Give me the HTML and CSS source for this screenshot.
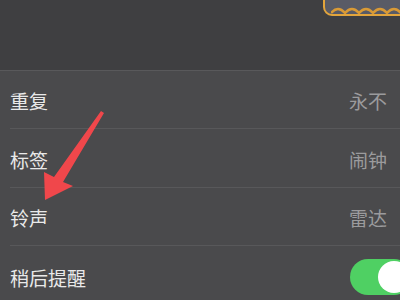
FILE: index.html
```html
<!DOCTYPE html>
<html lang="zh">
<head>
<meta charset="utf-8">
<link rel="stylesheet" href="styles.css">
</head>
<body>
<div class="screen">
  <div class="header">
    <div class="time-box">
      <svg class="waves" width="90" height="10" viewBox="0 0 90 10">
        <path d="M0 9 Q7 1 14 9 Q21 1 28 9 Q35 1 42 9 Q49 1 56 9 Q63 1 70 9 Q77 1 84 9 Q91 1 98 9" fill="none" stroke="#d99a36" stroke-width="2.5"/>
      </svg>
    </div>
  </div>
  <div class="list">
    <div class="row"><span class="label">重复</span><span class="value">永不</span></div>
    <div class="row"><span class="label">标签</span><span class="value">闹钟</span></div>
    <div class="row"><span class="label">铃声</span><span class="value">雷达</span></div>
    <div class="row last"><span class="label">稍后提醒</span><span class="toggle"><span class="knob"></span></span></div>
  </div>
  <svg class="arrow" width="400" height="300" viewBox="0 0 400 300">
    <polygon points="45,200 44,172 54,177 101,111 104,113 63,182 73,186" fill="#f0474b"/>
  </svg>
</div>
</body>
</html>
```
FILE: styles.css
```css
html, body {
  margin: 0;
  padding: 0;
  background: #4a4a4c;
}
.screen {
  position: relative;
  width: 400px;
  height: 300px;
  overflow: hidden;
  font-family: "Noto Sans CJK SC", "Noto Sans", sans-serif;
}
.header {
  height: 71px;
  background: #3f3f41;
  border-bottom: 1px solid #59595b;
  box-sizing: border-box;
  display: flex;
  justify-content: flex-end;
  align-items: flex-start;
}
.time-box {
  width: 100px;
  height: 34px;
  margin-top: -22px;
  margin-right: -27px;
  border: 2px solid #e3a53c;
  border-radius: 9px;
  background: #595b66;
  display: flex;
  align-items: flex-end;
  overflow: hidden;
}
.waves {
  display: block;
  margin-left: 6px;
}
.list {
  padding-left: 10px;
  background: #4a4a4c;
}
.row {
  height: 58px;
  box-sizing: border-box;
  border-bottom: 1px solid #58585a;
  display: flex;
  align-items: center;
  justify-content: space-between;
  padding-right: 13px;
  padding-top: 2px;
}
.row:nth-child(2) {
  height: 59px;
}
.row.last {
  border-bottom: none;
  padding-right: 0;
  padding-top: 4px;
}
.label {
  color: #e9e9e9;
  font-size: 19px;
}
.value {
  color: #9b9b9d;
  font-size: 19px;
}
.toggle {
  width: 62px;
  height: 36px;
  border-radius: 18px;
  background: #4fd063;
  margin-right: -12px;
  display: flex;
  align-items: center;
  justify-content: flex-end;
  padding-right: 2px;
  box-sizing: border-box;
}
.knob {
  width: 32px;
  height: 32px;
  border-radius: 50%;
  background: #ffffff;
}
.arrow {
  position: absolute;
  left: 0;
  top: 0;
  pointer-events: none;
}
```
